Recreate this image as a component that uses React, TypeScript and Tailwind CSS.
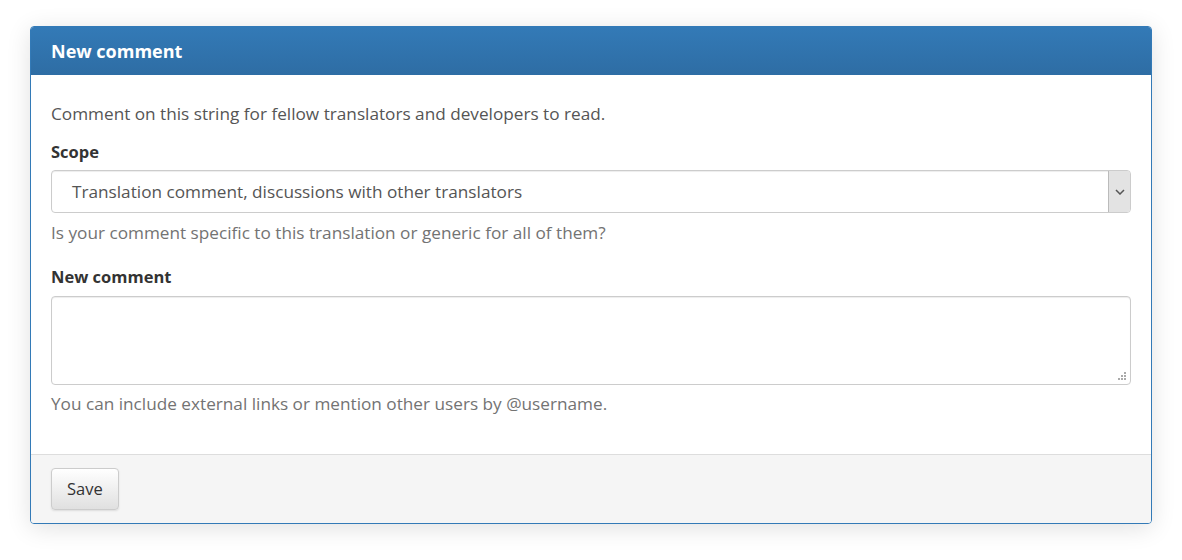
export default function App() {
  return (
    <div className="min-h-[560px] bg-white pt-[26px] px-[30px] font-['Open_Sans',sans-serif]">
      <div className="rounded-[4px] border border-[#337ab7] shadow-[0_4px_24px_rgba(0,0,0,0.12)] overflow-hidden">
        <div className="h-[48px] bg-gradient-to-b from-[#337ab7] to-[#2e6da4] px-[20px] flex items-center">
          <h3 className="text-white font-bold text-[18px]">New comment</h3>
        </div>
        <div className="bg-white px-[20px] pt-[28px] pb-[39px] text-[17.2px] text-[#555]">
          <p className="leading-[22px]">Comment on this string for fellow translators and developers to read.</p>
          <label className="block mt-[16px] font-bold text-[#333] text-[16.5px] leading-[22px]">Scope</label>
          <div className="mt-[7px] h-[43px] flex border border-[#ccc] rounded-[4px] shadow-[inset_0_1px_1px_rgba(0,0,0,0.075)]">
            <div className="flex-1 flex items-center pl-[20px] text-[#555]">Translation comment, discussions with other translators</div>
            <div className="w-[22px] bg-[#e3e3e3] border-l border-[#bbb] flex items-center justify-center rounded-r-[3px]">
              <svg width="10" height="6" viewBox="0 0 10 6"><path d="M1 1l4 4 4-4" fill="none" stroke="#555" strokeWidth="1.5" /></svg>
            </div>
          </div>
          <p className="mt-[9px] leading-[22px] text-[#737373]">Is your comment specific to this translation or generic for all of them?</p>
          <label className="block mt-[22px] font-bold text-[#333] text-[16.5px] leading-[22px]">New comment</label>
          <div className="relative mt-[8px] h-[89px] border border-[#ccc] rounded-[4px] shadow-[inset_0_1px_1px_rgba(0,0,0,0.075)]">
            <svg className="absolute right-[3px] bottom-[3px]" width="10" height="10" viewBox="0 0 10 10">
              <rect x="7" y="1" width="2" height="2" fill="#aaa" />
              <rect x="4" y="4" width="2" height="2" fill="#aaa" />
              <rect x="7" y="4" width="2" height="2" fill="#aaa" />
              <rect x="1" y="7" width="2" height="2" fill="#aaa" />
              <rect x="4" y="7" width="2" height="2" fill="#aaa" />
              <rect x="7" y="7" width="2" height="2" fill="#aaa" />
            </svg>
          </div>
          <p className="mt-[8px] leading-[22px] text-[#737373]">You can include external links or mention other users by @username.</p>
        </div>
        <div className="bg-[#f5f5f5] border-t border-[#ddd] px-[20px] py-[13px]">
          <button className="h-[42px] px-[15px] text-[16.5px] text-[#333] border border-[#ccc] rounded-[4px] bg-gradient-to-b from-white to-[#e0e0e0] shadow-[0_1px_2px_rgba(0,0,0,0.1)]">Save</button>
        </div>
      </div>
    </div>
  );
}
